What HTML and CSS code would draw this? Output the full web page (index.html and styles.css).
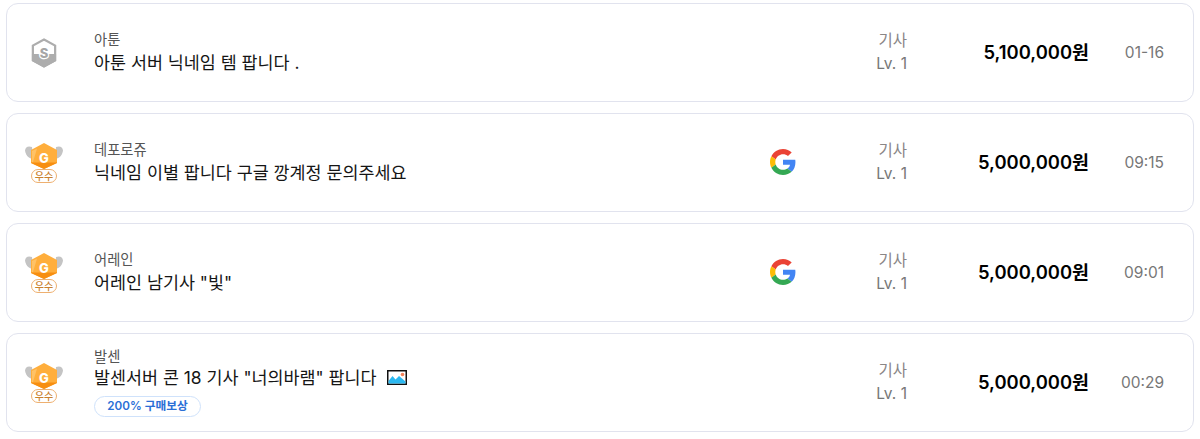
FILE: index.html
```html
<!DOCTYPE html>
<html lang="ko">
<head>
<meta charset="utf-8">
<title>거래 목록</title>
<link rel="stylesheet" href="styles.css">
</head>
<body>
<svg class="defs" width="0" height="0" aria-hidden="true">
  <defs>
    <symbol id="badge" viewBox="0 0 40 40">
      <path d="M8 4C4 2.500 1.500 4 1 7.500c.5 3.500 2.500 7 6 8l2-1z" fill="#c4c4c4"/>
      <path d="M32 4c4-1.500 6.500 0 7 3.500-.5 3.500-2.500 7-6 8l-2-1z" fill="#c4c4c4"/>
      <path d="M20 0 33 7V20L20 26 7 20V7z" fill="#ffae3c"/>
      <path d="M7 19.500H33V20L20 26 7 20z" fill="#f78e10"/>
      <path d="M8 8 13 5.500 9 19H8z" fill="#ffc266"/>
      <text x="20" y="19.500" class="badge-g">G</text>
      <rect x="7.500" y="26.500" width="25" height="13" rx="6.500" fill="#fff" stroke="#eeb070"/>
      <text x="20" y="36.800" class="badge-t">우수</text>
    </symbol>
    <symbol id="google" viewBox="0 0 48 48">
      <path fill="#EA4335" d="M24 9.500c3.540 0 6.710 1.220 9.210 3.600l6.850-6.850C35.900 2.380 30.470 0 24 0 14.620 0 6.510 5.380 2.560 13.220l7.980 6.190C12.430 13.720 17.740 9.500 24 9.500z"/>
      <path fill="#4285F4" d="M46.980 24.550c0-1.570-.15-3.090-.38-4.550H24v9.020h12.940c-.58 2.960-2.260 5.480-4.780 7.180l7.730 6c4.510-4.180 7.090-10.360 7.090-17.650z"/>
      <path fill="#FBBC05" d="M10.530 28.590c-.48-1.450-.76-2.990-.76-4.590s.27-3.140.76-4.590l-7.980-6.190C.92 16.460 0 20.120 0 24c0 3.880.92 7.540 2.560 10.780l7.970-6.190z"/>
      <path fill="#34A853" d="M24 48c6.480 0 11.930-2.130 15.890-5.810l-7.730-6c-2.150 1.450-4.920 2.300-8.160 2.300-6.260 0-11.570-4.220-13.470-9.910l-7.980 6.190C6.510 42.620 14.620 48 24 48z"/>
    </symbol>
  </defs>
</svg>
<main class="list">
  <article class="row">
    <div class="seller">
      <svg class="hex" viewBox="0 0 28 32" aria-hidden="true">
        <path d="M14 1.500 26 8V24L14 30.500 2 24V8z" fill="#fff" stroke="#adadad" stroke-width="2.400"/>
        <path d="M1 17H27V24.500L14 31.500 1 24.500z" fill="#adadad"/>
        <text x="14" y="21" class="hex-s">S</text>
      </svg>
    </div>
    <div class="info">
      <div class="server">아툰</div>
      <div class="title">아툰 서버 닉네임 템 팝니다 .</div>
    </div>
    <div class="pay"></div>
    <div class="job"><span>기사</span><span class="lv">Lv. 1</span></div>
    <div class="price">5,100,000원</div>
    <div class="time">01-16</div>
  </article>
  <article class="row">
    <div class="seller"><svg class="badge"><use href="#badge"/></svg></div>
    <div class="info">
      <div class="server">데포로쥬</div>
      <div class="title">닉네임 이별 팝니다 구글 깡계정 문의주세요</div>
    </div>
    <div class="pay"><svg class="g"><use href="#google"/></svg></div>
    <div class="job"><span>기사</span><span class="lv">Lv. 1</span></div>
    <div class="price">5,000,000원</div>
    <div class="time">09:15</div>
  </article>
  <article class="row">
    <div class="seller"><svg class="badge"><use href="#badge"/></svg></div>
    <div class="info">
      <div class="server">어레인</div>
      <div class="title">어레인 남기사 "빛"</div>
    </div>
    <div class="pay"><svg class="g"><use href="#google"/></svg></div>
    <div class="job"><span>기사</span><span class="lv">Lv. 1</span></div>
    <div class="price">5,000,000원</div>
    <div class="time">09:01</div>
  </article>
  <article class="row">
    <div class="seller"><svg class="badge"><use href="#badge"/></svg></div>
    <div class="info info-tagged">
      <div class="server">발센</div>
      <div class="title">발센서버 콘 18 기사 "너의바램" 팝니다
        <svg class="pic" viewBox="0 0 20 15" aria-hidden="true">
          <rect x=".75" y=".75" width="18.500" height="13.500" fill="#fff" stroke="#111" stroke-width="1.500"/>
          <path d="M1.500 13.500V11l4-5 3 3.500L12 6l3 2.500 3.500 3v2z" fill="#2bb8f0"/>
          <circle cx="15.500" cy="4.500" r="1.800" fill="#f5825a"/>
        </svg>
      </div>
      <div class="tag">200% 구매보상</div>
    </div>
    <div class="pay"></div>
    <div class="job"><span>기사</span><span class="lv">Lv. 1</span></div>
    <div class="price">5,000,000원</div>
    <div class="time">00:29</div>
  </article>
</main>
</body>
</html>
```

FILE: styles.css
```css
* { box-sizing: border-box; }
html, body { margin: 0; background: #fff; }
body {
  padding: 3px 6px 0;
  font-family: Inter, "Noto Sans CJK KR", "Noto Sans", sans-serif;
  color: #111;
}
.defs { position: absolute; }
.list { display: flex; flex-direction: column; gap: 11px; }
.row {
  display: flex;
  align-items: center;
  height: 99px;
  border: 1px solid #e1e3ee;
  border-radius: 12px;
  background: #fff;
}
.seller {
  width: 87px;
  flex: none;
  display: flex;
  justify-content: center;
  padding-right: 14px;
}
.hex { width: 26px; height: 30px; display: block; }
.hex-s { font: 800 14px Inter, sans-serif; fill: #a6a6a6; text-anchor: middle; stroke: #fff; stroke-width: 2.500px; paint-order: stroke; }
.badge { width: 40px; height: 40px; display: block; }
.badge-g { font: 800 13px Inter, sans-serif; fill: #fff; text-anchor: middle; }
.badge-t { font: 500 10px "Noto Sans CJK KR", sans-serif; fill: #c9822e; text-anchor: middle; }
.info { width: 676px; flex: none; padding-top: 3px; }
.info-tagged { padding-top: 0; }
.server { font-size: 14.300px; line-height: 17px; color: #555; }
.title { font-size: 17.400px; line-height: 29px; color: #151515; white-space: nowrap; }
.info-tagged .title { line-height: 26px; }
.pic { width: 20px; height: 15px; margin-left: 6px; vertical-align: -1px; }
.tag {
  width: 107px;
  height: 21px;
  margin-top: 5px;
  border: 1px solid #cfe2fb;
  border-radius: 11px;
  color: #2b6fd6;
  font-size: 11.700px;
  font-weight: 600;
  line-height: 19px;
  text-align: center;
}
.pay { width: 26px; flex: none; display: flex; }
.g { width: 26px; height: 26px; display: block; margin-top: -1px; }
.job {
  width: 111px;
  flex: none;
  display: flex;
  flex-direction: column;
  align-items: flex-end;
  font-size: 15.500px;
  line-height: 23px;
  color: #8a8686;
  padding-bottom: 1px;
}
.lv { color: #777; }
.price {
  width: 182px;
  flex: none;
  text-align: right;
  font-size: 18.400px;
  font-weight: 600;
  color: #000;
  padding-bottom: 4px;
}
.time {
  width: 75px;
  flex: none;
  text-align: right;
  font-size: 15.500px;
  color: #777;
}
```
